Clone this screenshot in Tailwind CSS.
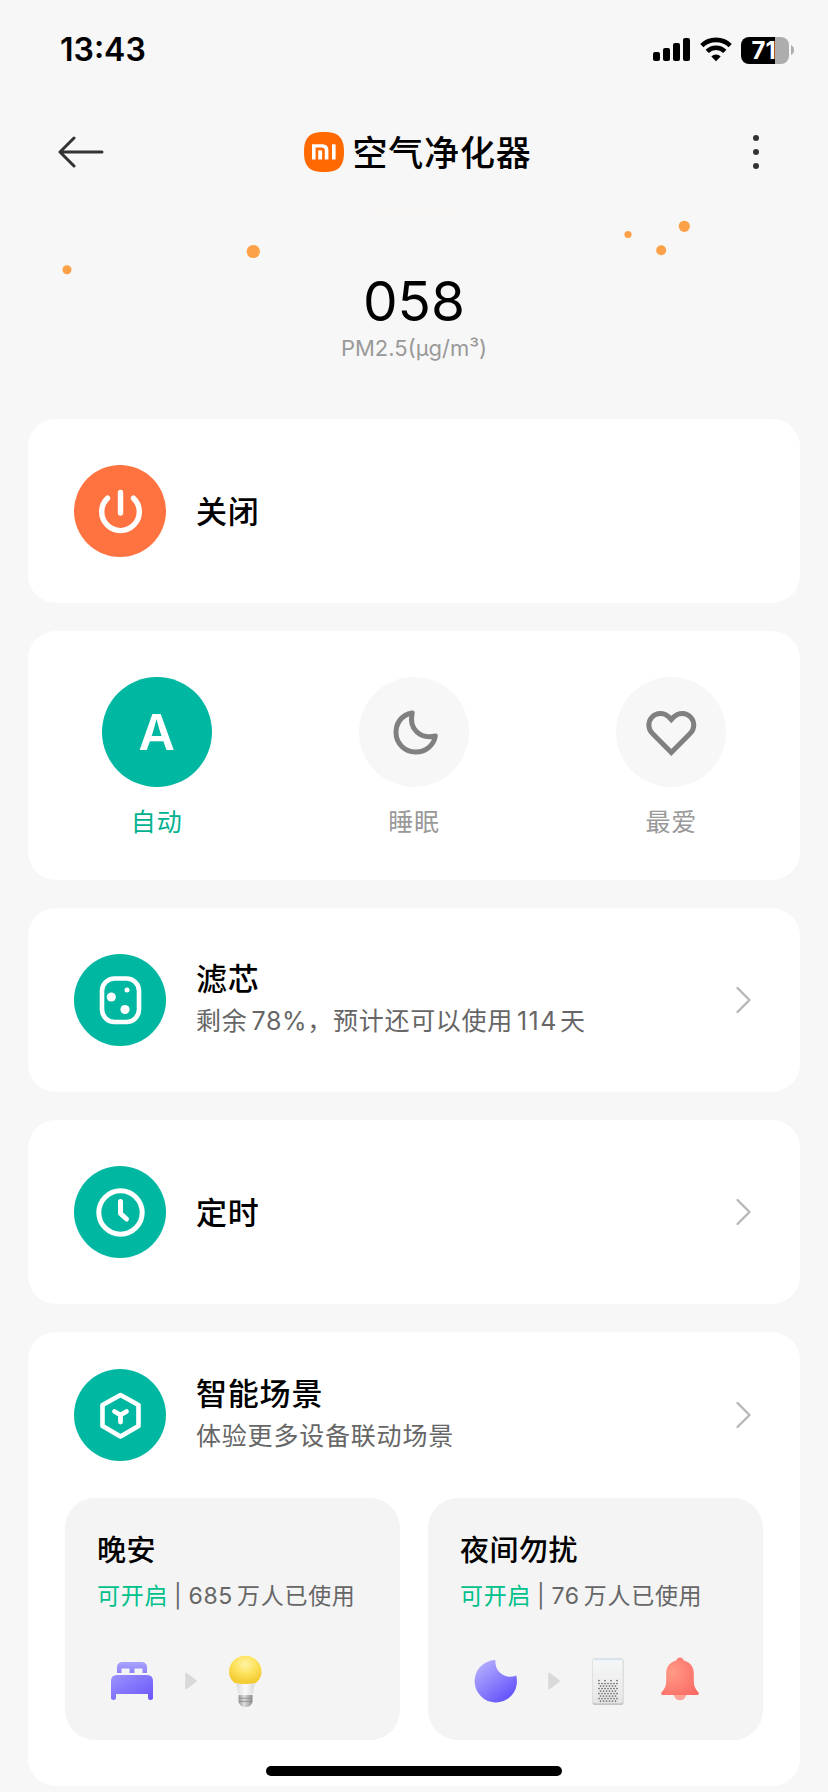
<!DOCTYPE html>
<html lang="zh-CN">
<head>
<meta charset="utf-8">
<title>空气净化器</title>
<script src="https://cdn.jsdelivr.net/npm/@tailwindcss/browser@4"></script>
</head>
<body class="bg-[#f7f7f7]">
<div class="relative flex h-[1792px] w-[828px] flex-col overflow-hidden bg-[#f7f7f7] font-['Inter','Noto_Sans_CJK_SC',sans-serif] whitespace-nowrap text-black">

  <!-- Status bar -->
  <header class="flex h-[100px] shrink-0 items-center justify-between pl-[60px] pr-[34px]">
    <span class="text-[32px] leading-[100px] font-semibold">13:43</span>
    <div class="flex items-center">
      <svg class="h-[28px] w-[38px]" viewBox="0 0 38 28"><g fill="#000"><rect x="0" y="16" width="7" height="9" rx="2"/><rect x="10" y="12" width="7" height="13" rx="2"/><rect x="20" y="7" width="7" height="18" rx="2"/><rect x="30" y="2" width="7" height="23" rx="2"/></g></svg>
      <svg class="ml-[9px] h-[28px] w-[32px]" viewBox="0 0 32 28" fill="none" stroke="#000" stroke-width="4.6"><path d="M1.8 9.6A20.4 20.4 0 0 1 30.2 9.6"/><path d="M7.2 15.3A12.6 12.6 0 0 1 24.8 15.3"/><path d="M16 25.2L11.3 20.5A6.7 6.7 0 0 1 20.7 20.5Z" fill="#000" stroke="none"/></svg>
      <div class="relative ml-[9px] h-[27px] w-[48px] overflow-hidden rounded-[8px] bg-[linear-gradient(90deg,#000_34px,#adadad_34px)]">
        <span class="absolute left-[10.5px] top-0 text-[24px] leading-[27px] font-bold text-white">71</span>
      </div>
      <svg class="ml-[2px] h-[10px] w-[3px]" viewBox="0 0 3 10"><path d="M0 0Q3 1.5 3 5T0 10Z" fill="#adadad"/></svg>
    </div>
  </header>

  <!-- Navigation bar -->
  <nav class="flex h-[104px] shrink-0 items-center justify-between pl-[58px] pr-[62px]">
    <svg class="h-[34px] w-[46px]" viewBox="0 0 46 34" fill="none" stroke="#333" stroke-width="3" stroke-linecap="round" stroke-linejoin="round"><path d="M16 3L2 17L16 31M2 17H44"/></svg>
    <div class="flex items-center gap-[8px]">
      <svg class="h-[40px] w-[40px]" viewBox="0 0 40 40"><path d="M20 0C34 0 40 5 40 20S34 40 20 40S0 35 0 20S6 0 20 0Z" fill="#ff6900"/><g fill="#fff"><path d="M8 12.3H18.4Q24.4 12.3 24.4 18.4V27.5H20.8V18.6Q20.8 15.6 17.8 15.6H11.6V27.5H8Z"/><rect x="14.2" y="18.4" width="3.9" height="9.1"/><rect x="28" y="12.3" width="3.6" height="15.2"/></g></svg>
      <h1 class="pt-[2px] text-[35px] leading-[50px] font-medium tracking-[0.8px]">空气净化器</h1>
    </div>
    <svg class="h-[40px] w-[34px]" viewBox="0 0 34 40" fill="#333"><circle cx="24" cy="6" r="3"/><circle cx="24" cy="20" r="3"/><circle cx="24" cy="34" r="3"/></svg>
  </nav>

  <!-- Air quality reading -->
  <section class="relative flex h-[215px] shrink-0 flex-col items-center pt-[64px]">
    <svg class="absolute left-0 top-0 h-[100px] w-[828px]" viewBox="0 0 828 100"><rect x="370" y="5" width="88" height="8" rx="4" fill="#f9f5f4"/><g fill="#fca148"><circle cx="67" cy="65.7" r="4.5"/><circle cx="253.3" cy="47.5" r="6.6"/><circle cx="628" cy="30.5" r="3.6"/><circle cx="684.3" cy="22.3" r="5.6"/><circle cx="661.2" cy="46.2" r="5"/></g></svg>
    <div class="text-[55px] leading-[66px]">058</div>
    <div class="text-[22px] leading-[28px] text-[#999]">PM2.5(μg/m³)</div>
  </section>

  <main class="flex flex-col gap-[28px] px-[28px]">
    <section class="flex h-[184px] items-center rounded-[28px] bg-white px-[46px]">
      <svg class="h-[92px] w-[92px]" viewBox="0 0 92 92"><circle cx="46" cy="46" r="46" fill="#ff7340"/><g fill="none" stroke="#fff" stroke-width="5.4" stroke-linecap="round"><path d="M46.5 27.5V48"/><path d="M33.5 33.2A18.8 18.8 0 1 0 59.5 33.2"/></g></svg>
      <h2 class="ml-[30px] pt-[2px] text-[31px] leading-[40px] font-medium tracking-[0.8px]">关闭</h2>
    </section>

    <section class="grid h-[249px] grid-cols-3 rounded-[28px] bg-white pt-[46px]">
      <div class="flex flex-col items-center">
        <div class="flex h-[110px] w-[110px] items-center justify-center rounded-full bg-[#00b7a1]">
          <span class="text-[50px] leading-[60px] font-semibold text-white">A</span>
        </div>
        <span class="mt-[17px] text-[25px] leading-[36px] tracking-[0.8px] text-[#00b18f]">自动</span>
      </div>
      <div class="flex flex-col items-center">
        <div class="h-[110px] w-[110px] rounded-full bg-[#f7f7f7]">
          <svg class="h-[110px] w-[110px]" viewBox="0 0 110 110" fill="none" stroke="#808080" stroke-width="5" stroke-linejoin="round"><path d="M53.2 36C42 38 37 46.500 37 55.500A19.500 19.500 0 0 0 57 75C67 75 75 68 76.300 59C61 62.500 49.500 52 53.200 36Z"/></svg>
        </div>
        <span class="mt-[17px] text-[25px] leading-[36px] tracking-[0.8px] text-[#999]">睡眠</span>
      </div>
      <div class="flex flex-col items-center">
        <div class="h-[110px] w-[110px] rounded-full bg-[#f7f7f7]">
          <svg class="h-[110px] w-[110px]" viewBox="0 0 110 110" fill="none" stroke="#808080" stroke-width="5"><path d="M55.300 75.500L36.500 56.500A11.200 11.200 0 0 1 52.400 39.600L55.300 42.600L58.200 39.600A11.200 11.200 0 0 1 74.100 56.500Z"/></svg>
        </div>
        <span class="mt-[17px] text-[25px] leading-[36px] tracking-[0.8px] text-[#999]">最爱</span>
      </div>
    </section>

    <section class="flex h-[184px] items-center rounded-[28px] bg-white pl-[46px] pr-[47px]">
      <svg class="h-[92px] w-[92px]" viewBox="0 0 92 92"><circle cx="46" cy="46" r="46" fill="#00b7a1"/><rect x="28" y="24.500" width="37" height="43.500" rx="12.500" fill="none" stroke="#fff" stroke-width="4.600"/><g fill="#fff"><circle cx="37.300" cy="43" r="4.600"/><circle cx="53" cy="36" r="2.500"/><circle cx="51" cy="55.500" r="4.600"/></g></svg>
      <div class="ml-[30px] grow">
        <h2 class="text-[31px] leading-[43px] font-medium tracking-[0.8px]">滤芯</h2>
        <p class="text-[25px] leading-[43px] tracking-[0.7px] text-[#666]">剩余<span class="ml-[4px]">78%</span>，预计还可以使用<span class="ml-[4px] mr-[2px] tracking-[1.5px]">114</span>天</p>
      </div>
      <svg class="h-[30px] w-[18px]" viewBox="0 0 18 30" fill="none" stroke="#b8b8b8" stroke-width="2.400" stroke-linecap="round" stroke-linejoin="round"><path d="M2.500 3L14.500 15L2.500 27"/></svg>
    </section>

    <section class="flex h-[184px] items-center rounded-[28px] bg-white pl-[46px] pr-[47px]">
      <svg class="h-[92px] w-[92px]" viewBox="0 0 92 92"><circle cx="46" cy="46" r="46" fill="#00b7a1"/><g fill="none" stroke="#fff" stroke-linecap="round" stroke-linejoin="round"><circle cx="46.500" cy="46.500" r="21.700" stroke-width="5"/><path d="M46.500 35.500V47.500L52.500 53" stroke-width="5"/></g></svg>
      <h2 class="ml-[30px] grow pt-[2px] text-[31px] leading-[40px] font-medium tracking-[0.8px]">定时</h2>
      <svg class="h-[30px] w-[18px]" viewBox="0 0 18 30" fill="none" stroke="#b8b8b8" stroke-width="2.400" stroke-linecap="round" stroke-linejoin="round"><path d="M2.500 3L14.500 15L2.500 27"/></svg>
    </section>

    <section class="h-[454px] rounded-[28px] bg-white pt-[37px]">
      <div class="flex h-[92px] items-center pl-[46px] pr-[47px]">
        <svg class="h-[92px] w-[92px]" viewBox="0 0 92 92"><circle cx="46" cy="46" r="46" fill="#00b7a1"/><g fill="none" stroke="#fff" stroke-width="4.600" stroke-linecap="round" stroke-linejoin="round"><path d="M46.500 26L64.500 36V57L46.500 67.500L28.500 57V36Z"/><path d="M40.500 42.500L46.500 46L52.500 42.500M46.500 46V53" stroke-width="4.800"/></g></svg>
        <div class="ml-[30px] grow">
          <h2 class="text-[31px] leading-[43px] font-medium tracking-[0.8px]">智能场景</h2>
          <p class="text-[25px] leading-[43px] tracking-[0.8px] text-[#666]">体验更多设备联动场景</p>
        </div>
        <svg class="h-[30px] w-[18px]" viewBox="0 0 18 30" fill="none" stroke="#b8b8b8" stroke-width="2.400" stroke-linecap="round" stroke-linejoin="round"><path d="M2.500 3L14.500 15L2.500 27"/></svg>
      </div>

      <div class="mt-[37px] flex gap-[28px] px-[37px]">
        <article class="h-[242px] w-[335px] rounded-[30px] bg-[#f4f4f4] px-[32px] pt-[33px]">
          <h3 class="text-[29px] leading-[40px] font-medium tracking-[0.5px]">晚安</h3>
          <p class="mt-[7px] flex text-[23px] leading-[36px] tracking-[0.7px] text-[#666]"><span class="text-[#00c08b]">可开启</span><span class="ml-[6px]">|</span><span class="ml-[6px]">685</span><span class="ml-[4px]">万人已使用</span></p>
          <div class="mt-[37px] flex items-center pl-[7px]">
            <svg class="h-[60px] w-[56px]" viewBox="0 0 56 60">
              <defs><linearGradient id="bedTop" x1="0" y1="0" x2="0" y2="1"><stop offset="0" stop-color="#aaa3fd"/><stop offset="1" stop-color="#8d83fb"/></linearGradient><linearGradient id="bedBody" x1="0" y1="0" x2="1" y2="1"><stop offset="0" stop-color="#9b92fc"/><stop offset="1" stop-color="#6a55fa"/></linearGradient></defs>
              <path d="M13 22V16.500Q13 11 18.500 11H37.500Q43 11 43 16.500V22H38.500V17.500H30.500V22H25.500V17.500H17.500V22Z" fill="url(#bedTop)"/>
              <path d="M7 30Q7 24 13 24H43Q49 24 49 30V46.500Q49 49 46.500 49T44 46.500V43H12V46.500Q12 49 9.500 49T7 46.500Z" fill="url(#bedBody)"/>
            </svg>
            <svg class="ml-[25px] mr-[20px] h-[18px] w-[12px]" viewBox="0 0 12 18"><path d="M1 1.500L11 9L1 16.500Z" fill="#d9d9d9" stroke="#d9d9d9" stroke-width="1.600" stroke-linejoin="round"/></svg>
            <svg class="h-[60px] w-[56px]" viewBox="0 0 56 60">
              <defs><radialGradient id="bulb" cx=".5" cy=".3" r=".65"><stop offset="0" stop-color="#fff3a6"/><stop offset=".5" stop-color="#fde35f"/><stop offset="1" stop-color="#f4cb33"/></radialGradient><linearGradient id="screw"><stop offset="0" stop-color="#999"/><stop offset=".4" stop-color="#dedede"/><stop offset="1" stop-color="#8c8c8c"/></linearGradient><linearGradient id="neck"><stop offset="0" stop-color="#dcdcdc"/><stop offset=".5" stop-color="#fafafa"/><stop offset="1" stop-color="#d9d9d9"/></linearGradient></defs>
              <path d="M19 30H38L36 42.500Q28.500 46 21 42.500Z" fill="url(#neck)"/>
              <path d="M17.500 32Q12 27 12 21A16.200 16.200 0 0 1 44.500 21Q44.500 27 39 32Q28 34 17.500 32Z" fill="url(#bulb)"/>
              <path d="M21.500 44H35.500V51Q34 56 28.500 56T21.500 51Z" fill="url(#screw)"/>
              <path d="M22 47.200H35M22 50.400H35" stroke="#888" stroke-width=".8"/>
            </svg>
          </div>
        </article>

        <article class="h-[242px] w-[335px] rounded-[30px] bg-[#f4f4f4] px-[32px] pt-[33px]">
          <h3 class="text-[29px] leading-[40px] font-medium tracking-[0.5px]">夜间勿扰</h3>
          <p class="mt-[7px] flex text-[23px] leading-[36px] tracking-[0.7px] text-[#666]"><span class="text-[#00c08b]">可开启</span><span class="ml-[6px]">|</span><span class="ml-[6px]">76</span><span class="ml-[4px]">万人已使用</span></p>
          <div class="mt-[37px] flex items-center pl-[7px]">
            <svg class="h-[60px] w-[56px]" viewBox="0 0 56 60">
              <defs><linearGradient id="moon" x1=".1" y1=".1" x2=".75" y2=".95"><stop offset="0" stop-color="#b4aefe"/><stop offset="1" stop-color="#6553fa"/></linearGradient></defs>
              <path d="M28.500 9A21.200 21.200 0 1 0 49.200 24.500C39 29 27 21 28.500 9Z" fill="url(#moon)"/>
            </svg>
            <svg class="ml-[25px] mr-[20px] h-[18px] w-[12px]" viewBox="0 0 12 18"><path d="M1 1.500L11 9L1 16.500Z" fill="#d9d9d9" stroke="#d9d9d9" stroke-width="1.600" stroke-linejoin="round"/></svg>
            <svg class="h-[60px] w-[56px]" viewBox="0 0 56 60">
              <defs><linearGradient id="case" x1="0" y1="0" x2="0" y2="1"><stop offset="0" stop-color="#f6f7f8"/><stop offset="1" stop-color="#e6e6e6"/></linearGradient></defs>
              <rect x="12.500" y="8" width="31" height="46" rx="2.500" fill="#c4c4c4"/>
              <rect x="12.500" y="7.500" width="30.500" height="44.500" rx="2.200" fill="url(#case)" stroke="#dedede" stroke-width=".7"/>
              <rect x="14" y="7" width="28" height="2.200" fill="#d9e3ee"/>
              <g stroke="#666" stroke-width="1.700" stroke-linecap="round" stroke-dasharray="0 3"><path d="M19 32.500H38M20.500 35H37M19 37.500H38M20.500 40H37M19 42.500H38M20.500 45H37M19 47.500H38M20.500 50H37"/><path d="M19 29.500H38" stroke-dasharray="0 6"/></g>
            </svg>
            <svg class="ml-[16px] h-[60px] w-[56px]" viewBox="0 0 56 60">
              <defs><radialGradient id="bell" cx=".3" cy=".4" r=".8"><stop offset="0" stop-color="#ff9a85"/><stop offset="1" stop-color="#fb6a64"/></radialGradient></defs>
              <circle cx="28" cy="43" r="6.300" fill="#fda497"/>
              <path d="M24.300 9.500A3.800 3.800 0 0 1 31.700 9.500C38 11 41.800 16 41.800 22V30C41.800 36 44.500 39 46.800 42Q47.500 44 45.500 44H10.500Q8.500 44 9.200 42C11.500 39 14.200 36 14.200 30V22C14.200 16 18 11 24.300 9.500Z" fill="url(#bell)"/>
            </svg>
          </div>
        </article>
      </div>
    </section>
  </main>

  <!-- Home indicator -->
  <div class="absolute left-[266px] top-[1766px] h-[10px] w-[296px] rounded-full bg-black"></div>
</div>
</body>
</html>
